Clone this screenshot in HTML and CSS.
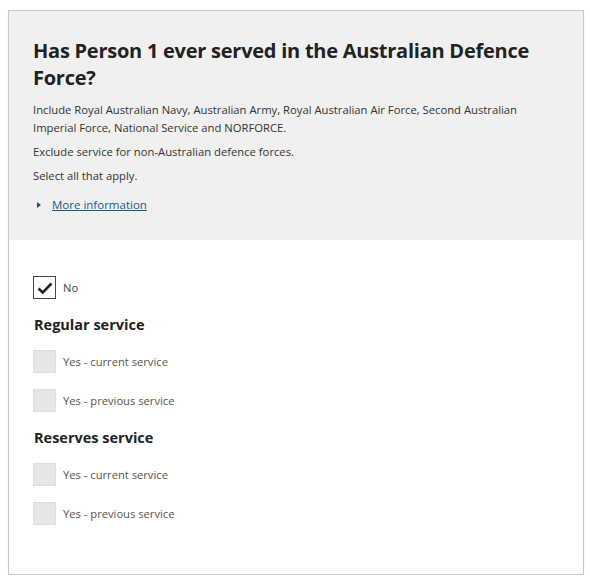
FILE: index.html
```html
<!DOCTYPE html>
<html lang="en">
<head>
<meta charset="utf-8">
<link rel="stylesheet" href="styles.css">
</head>
<body>
<div class="card">
  <div class="head">
    <h1 class="title">Has Person 1 ever served in the Australian Defence Force?</h1>
    <p class="desc">Include Royal Australian Navy, Australian Army, Royal Australian Air Force, Second Australian Imperial Force, National Service and NORFORCE.</p>
    <p class="desc">Exclude service for non-Australian defence forces.</p>
    <p class="desc">Select all that apply.</p>
    <div class="more"><span class="tri"></span><a href="#" class="more-link">More information</a></div>
  </div>
  <div class="body">
    <div class="opt">
      <span class="box checked"><svg width="16" height="14" viewBox="0 0 16 14"><path d="M1.5 7.5 L5.8 11.5 L14.5 2.5" fill="none" stroke="#222" stroke-width="2.6"/></svg></span>
      <span class="lbl dark">No</span>
    </div>
    <h2 class="sub">Regular service</h2>
    <div class="opt"><span class="box"></span><span class="lbl">Yes - current service</span></div>
    <div class="opt"><span class="box"></span><span class="lbl">Yes - previous service</span></div>
    <h2 class="sub">Reserves service</h2>
    <div class="opt"><span class="box"></span><span class="lbl">Yes - current service</span></div>
    <div class="opt"><span class="box"></span><span class="lbl">Yes - previous service</span></div>
  </div>
</div>
</body>
</html>
```
FILE: styles.css
```css
html, body { margin: 0; padding: 0; background: #fff; }
body { padding: 10px 6px 0 8px; font-family: "Open Sans", "Noto Sans", sans-serif; color: #222; }
.card {
  width: 576px;
  height: 565px;
  border: 1px solid #c8c8c8;
  box-sizing: border-box;
  box-shadow: 0 0 1px rgba(0,0,0,0.1);
}
.head {
  background: #f0f0f0;
  padding: 26px 24px 24px 24px;
  height: 229px;
  box-sizing: border-box;
}
.title {
  margin: 0 0 10px 0;
  font-size: 20px;
  line-height: 27px;
  font-weight: 700;
  color: #222;
  letter-spacing: -0.25px;
}
.desc {
  margin: 0 0 6px 0;
  font-size: 11.25px;
  line-height: 18px;
  color: #333;
}
.more { display: flex; align-items: center; margin-top: 12px; padding-left: 4px; }
.tri {
  width: 0; height: 0;
  border-left: 4px solid #1f4e79;
  border-top: 3px solid transparent;
  border-bottom: 3px solid transparent;
  margin-right: 11px;
}
.more-link { font-size: 11.5px; color: #1a5a8c; text-decoration: underline; }
.body { padding: 36px 24px 0 24px; }
.opt { display: flex; align-items: center; height: 23px; margin-bottom: 16px; }
.box {
  width: 23px; height: 23px; box-sizing: border-box;
  background: #e6e6e6; border: 1px solid #dedede;
  display: flex; align-items: center; justify-content: center;
  margin-right: 7px;
  flex-shrink: 0;
}
.box.checked { background: #fff; border: 1.5px solid #444; }
.lbl { font-size: 11.2px; color: #555; }
.lbl.dark { color: #444; }
.sub { margin: 0 0 15px 1px; font-size: 14.5px; line-height: 20px; font-weight: 700; color: #222; }
```
